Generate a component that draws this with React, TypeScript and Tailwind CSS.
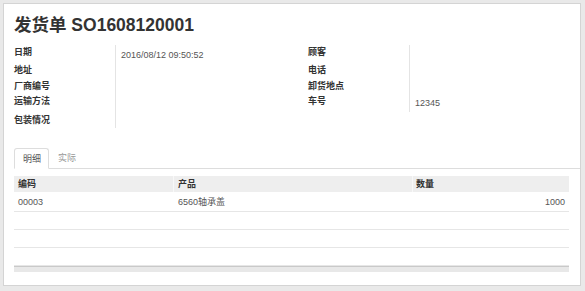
import React from "react";

const leftRows: { label: string; value?: string; h: string; pt?: string }[] = [
  { label: "日期", value: "2016/08/12 09:50:52", h: "h-[18px]", pt: "pt-[3px]" },
  { label: "地址", h: "h-[16px]" },
  { label: "厂商编号", h: "h-[15px]" },
  { label: "运输方法", h: "h-[19px]" },
  { label: "包装情况", h: "h-[15px]" },
];

const rightRows: { label: string; value?: string; h: string; pt?: string }[] = [
  { label: "顾客", h: "h-[18px]" },
  { label: "电话", h: "h-[16px]" },
  { label: "卸货地点", h: "h-[15px]" },
  { label: "车号", value: "12345", h: "h-[18px]", pt: "pt-[2px]" },
];

function Group({ rows, width }: { rows: typeof leftRows; width: string }) {
  return (
    <div className={`flex flex-col ${width}`}>
      {rows.map((r) => (
        <div key={r.label} className={`flex ${r.h}`}>
          <div className="w-[101px] shrink-0 font-bold text-[#333] leading-[14px]">{r.label}</div>
          <div className={`flex-1 border-l border-[#e4e4e4] pl-[5px] text-[#555] leading-[14px] ${r.pt ?? ""}`}>
            {r.value ?? ""}
          </div>
        </div>
      ))}
    </div>
  );
}

export default function App() {
  return (
    <div className="w-[585px] h-[291px] bg-[#e9e9e9] pt-[3px] pl-[3px] pr-[4px] pb-[5px] font-['Liberation_Sans','Noto_Sans_CJK_SC',sans-serif] text-[9px]">
      <div className="h-full bg-white border border-[#d4d4d4] flex flex-col">
        <div className="pl-[10px] pt-[11px] text-[17.5px] leading-[21px] font-bold text-[#333]">
          发货单 SO1608120001
        </div>
        <div className="flex pl-[10px] mt-[9px]">
          <Group rows={leftRows} width="w-[294px]" />
          <Group rows={rightRows} width="w-[200px]" />
        </div>
        <div className="ml-[10px] mt-[20px] flex border-b border-[#dddddd] h-[21px]">
          <div className="h-[21px] -mb-px border border-b-white border-[#dddddd] rounded-t-[3px] bg-white pl-[8px] pr-[7px] pt-[4px] leading-[13px] text-[#555]">
            明细
          </div>
          <div className="pl-[9px] pt-[4px] leading-[13px] text-[#999]">实际</div>
        </div>
        <div className="ml-[10px] mr-[11px] mt-[7px] flex flex-col">
          <div className="flex h-[16px] bg-[#eeeeee] font-bold text-[#333] leading-[16px]">
            <div className="w-[159px] pl-[4px]">编码</div>
            <div className="w-[239px] pl-[4px] border-l border-[#f8f8f8]">产品</div>
            <div className="flex-1 pl-[3px] border-l border-[#f8f8f8]">数量</div>
          </div>
          <div className="flex h-[20px] border-b border-[#e6e6e6] text-[#555] leading-[20px]">
            <div className="w-[159px] pl-[4px]">00003</div>
            <div className="w-[239px] pl-[5px]">6560轴承盖</div>
            <div className="flex-1 pr-[4px] text-right">1000</div>
          </div>
          <div className="h-[18px] border-b border-[#e6e6e6]" />
          <div className="h-[18px] border-b border-[#e6e6e6]" />
          <div className="h-[18px] border-b border-[#e6e6e6]" />
          <div className="h-[6px] border-t border-[#c9c9c9] bg-[#e8e8e8]" />
        </div>
      </div>
    </div>
  );
}
